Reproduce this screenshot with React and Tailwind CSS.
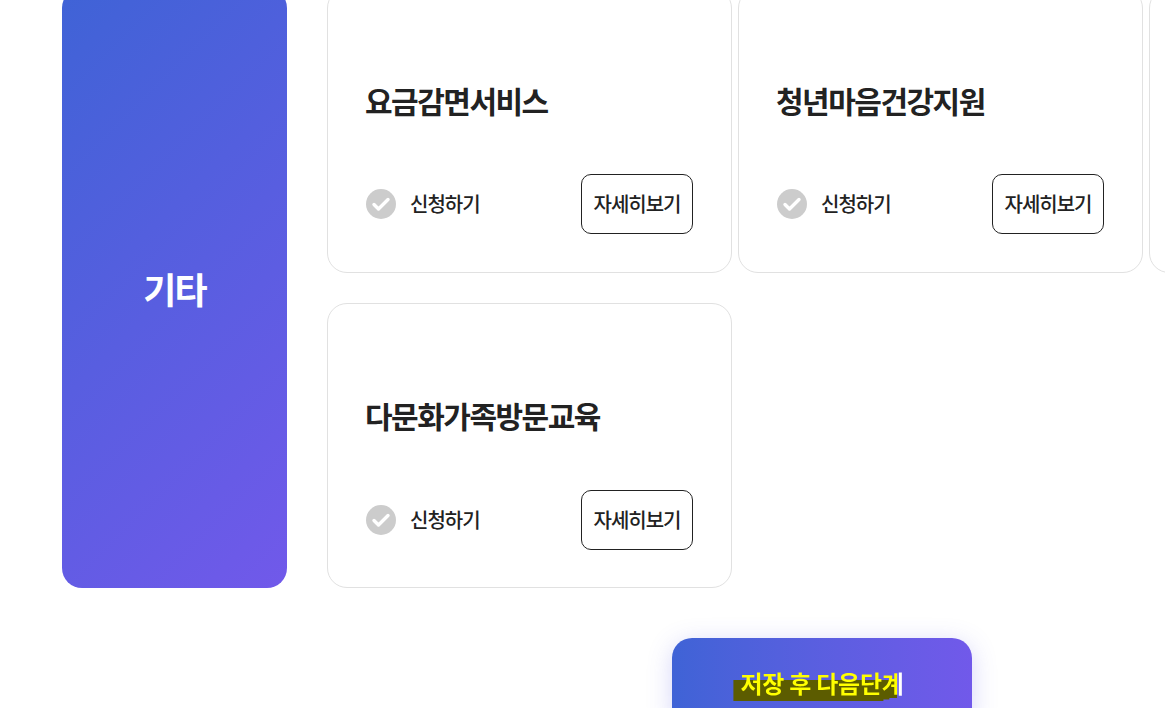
const FONT = "font-['Noto_Sans_CJK_KR','Noto_Sans',sans-serif]";

const ServiceCard = ({ title }) => (
  <div className="w-[405px] h-[285.4px] shrink-0 bg-white border border-[#e1e1e1] rounded-[20px] pl-[38px] pr-[38px] pt-[91px]">
    <h3 className="-ml-[1px] text-[30px] leading-[40px] font-bold tracking-[-1.5px] text-[#222222]">{title}</h3>
    <div className="flex items-center justify-between mt-[54.6px]">
      <div className="flex items-center gap-[14px]">
        <span className="w-[30px] h-[30px] rounded-full bg-[#cccccc] flex items-center justify-center">
          <svg width="20" height="16" viewBox="0 0 20 16" fill="none">
            <path d="M3 8.5l4.5 4.5L17 3.5" stroke="#fff" strokeWidth="3.4" strokeLinecap="round" strokeLinejoin="round" />
          </svg>
        </span>
        <span className="text-[20px] font-medium tracking-[-1px] text-[#222222]">신청하기</span>
      </div>
      <button className="w-[112px] h-[60px] border border-[#222222] rounded-[10px] bg-white text-[20px] font-medium tracking-[-1px] text-[#222222]">
        자세히보기
      </button>
    </div>
  </div>
);

const App = () => {
  return (
    <div className={`w-[1165px] h-[708px] overflow-hidden bg-white ${FONT}`}>
      <div className="flex pl-[62px] gap-[40px] -mt-[12.4px]">
        <div className="w-[225px] h-[600.4px] shrink-0 rounded-[20px] bg-[linear-gradient(135deg,#3f63d6,#7159ea)] flex items-center justify-center">
          <span className="text-[36px] font-bold tracking-[-1.8px] text-white">기타</span>
        </div>
        <div className="flex flex-col gap-[30px]">
          <div className="flex gap-[6px]">
            <ServiceCard title="요금감면서비스" />
            <ServiceCard title="청년마음건강지원" />
            <div className="w-[405px] h-[285.4px] shrink-0 bg-white border border-[#e1e1e1] rounded-[20px]" />
          </div>
          <div className="flex gap-[6px]">
            <ServiceCard title="다문화가족방문교육" />
          </div>
        </div>
      </div>
      <div className="pl-[672px] pt-[49.6px]">
        <button className="w-[300px] h-[90px] rounded-[20px] bg-gradient-to-r from-[#3f63d6] to-[#7159ea] shadow-[0_5px_25px_rgba(90,90,230,0.25)] text-[24px] font-bold tracking-[-0.25px] text-white">
          <span className="relative inline-block whitespace-nowrap">
            <span aria-hidden="true" className="absolute left-[-7px] top-[15px] w-[164px] h-[21px] bg-[#5c5c00] [clip-path:polygon(0_0,100%_0,100%_18px,156px_18px,156px_19.5px,150px_19.5px,150px_100%,0_100%)]" />
            <span className="relative bg-[linear-gradient(90deg,#ffff00_157px,#ffffff_157px)] bg-clip-text text-transparent">저장 후 다음단계</span>
          </span>
        </button>
      </div>
    </div>
  );
};

export default App;
